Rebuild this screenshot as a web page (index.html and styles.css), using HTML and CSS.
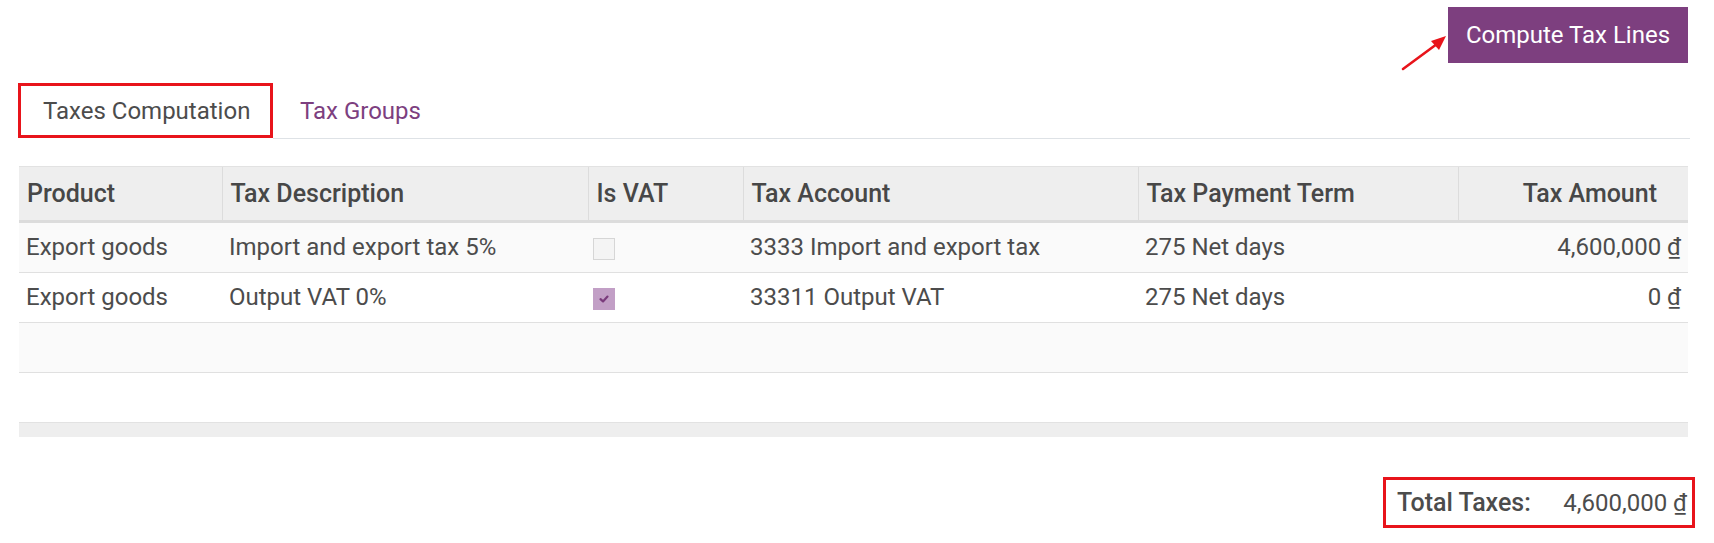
FILE: index.html
```html
<!DOCTYPE html>
<html lang="en">
<head>
<meta charset="utf-8">
<title>Taxes Computation</title>
<link rel="stylesheet" href="styles.css">
</head>
<body>
<div class="page">
  <div class="topbar">
    <svg class="arrow" width="56" height="44" viewBox="0 0 56 44" aria-hidden="true">
      <line x1="4" y1="39" x2="42" y2="11" stroke="#e8141b" stroke-width="2.6" stroke-linecap="round"/>
      <polygon points="47,6 32,11 40,20" fill="#e8141b"/>
    </svg>
    <button class="btn-primary">Compute Tax Lines</button>
  </div>

  <div class="tabs">
    <div class="tab active">Taxes Computation</div>
    <div class="tab">Tax Groups</div>
    <div class="tab-rest"></div>
  </div>

  <table class="grid">
    <colgroup>
      <col class="c-product"><col class="c-desc"><col class="c-vat"><col class="c-account"><col class="c-term"><col class="c-amount">
    </colgroup>
    <thead>
      <tr>
        <th>Product</th>
        <th>Tax Description</th>
        <th>Is VAT</th>
        <th>Tax Account</th>
        <th>Tax Payment Term</th>
        <th class="num">Tax Amount</th>
      </tr>
    </thead>
    <tbody>
      <tr class="odd">
        <td>Export goods</td>
        <td>Import and export tax 5%</td>
        <td><span class="cb"></span></td>
        <td>3333 Import and export tax</td>
        <td>275 Net days</td>
        <td class="num">4,600,000 ₫</td>
      </tr>
      <tr>
        <td>Export goods</td>
        <td>Output VAT 0%</td>
        <td><span class="cb checked"><svg width="12" height="10" viewBox="0 0 12 10"><path d="M2.5 5.2 L5 7.4 L9.5 2.6" fill="none" stroke="#7a3b7c" stroke-width="2.2" stroke-linecap="round" stroke-linejoin="round"/></svg></span></td>
        <td>33311 Output VAT</td>
        <td>275 Net days</td>
        <td class="num">0 ₫</td>
      </tr>
      <tr class="odd empty"><td colspan="6"></td></tr>
      <tr class="empty blank"><td colspan="6"></td></tr>
    </tbody>
    <tfoot>
      <tr><td colspan="6"></td></tr>
    </tfoot>
  </table>

  <div class="totals">
    <div class="total-box">
      <span class="total-label">Total Taxes:</span>
      <span class="total-value">4,600,000 ₫</span>
    </div>
  </div>
</div>
</body>
</html>
```

FILE: styles.css
```css
html, body {
  margin: 0;
  padding: 0;
  background: #ffffff;
}

body {
  font-family: Roboto, "Noto Sans", "Liberation Sans", sans-serif;
  font-size: 24px;
  color: #4c4c4c;
  width: 1714px;
  height: 543px;
  overflow: hidden;
}

.page {
  padding: 7px 24px 0 18px;
}

.topbar {
  position: relative;
  display: flex;
  justify-content: flex-end;
  padding-right: 2px;
}

.arrow {
  position: absolute;
  left: 1381px;
  top: 23px;
}

.btn-primary {
  font-family: inherit;
  font-size: 24px;
  color: #ffffff;
  background: #7d3f7f;
  border: none;
  width: 240px;
  height: 56px;
  padding: 0;
  cursor: pointer;
}

.tabs {
  display: flex;
  margin-top: 20px;
  height: 56px;
}

.tab {
  display: flex;
  align-items: center;
  padding: 0 27px 0 0;
  color: #7d3f7f;
  border-bottom: 1px solid #dee2e6;
  box-sizing: border-box;
}

.tab.active {
  width: 255px;
  height: 55px;
  padding: 0 0 0 22px;
  color: #4c4c4c;
  border: 3px solid #e8141b;
  margin-right: 27px;
}

.tab-rest {
  flex: 1;
  border-bottom: 1px solid #dee2e6;
}

.tab.active + .tab {
  margin-left: -27px;
  padding-left: 27px;
}

.grid {
  margin: 27px 2px 0 1px;
  width: 1669px;
  table-layout: fixed;
  border-collapse: collapse;
}

.c-product { width: 203px; }
.c-desc { width: 366px; }
.c-vat { width: 155px; }
.c-account { width: 395px; }
.c-term { width: 320px; }
.c-amount { width: 230px; }

.grid th {
  background: #eeeeee;
  font-size: 25px;
  font-weight: 500;
  color: #474747;
  text-align: left;
  height: 55px;
  padding: 0 8px;
  line-height: 25px;
  border-top: 1px solid #e2e2e2;
  border-bottom: 3px solid #dcdcdc;
  border-left: 1px solid #dcdcdc;
  white-space: nowrap;
  box-sizing: border-box;
}

.grid th:first-child {
  border-left: none;
}

.grid th.num {
  text-align: right;
  padding-right: 31px;
}

.grid td {
  height: 49px;
  padding: 0 7px;
  line-height: 25px;
  border-bottom: 1px solid #e0e0e0;
  white-space: nowrap;
  overflow: hidden;
}

.grid td.num {
  text-align: right;
}

.grid tr.odd td {
  background: #fafafa;
}

.grid tr.blank td {
  border-bottom: none;
}

.grid tfoot td {
  height: 14px;
  padding: 0;
  background: #eeeeee;
  border-top: 1px solid #e2e2e2;
  border-bottom: none;
}

.cb {
  display: inline-flex;
  align-items: center;
  justify-content: center;
  width: 22px;
  height: 22px;
  box-sizing: border-box;
  border: 1px solid #d6d6d6;
  background: #f4f4f4;
  vertical-align: middle;
  margin-left: -2px;
}

.cb.checked {
  background: #c29fc6;
  border-color: #c29fc6;
}

.totals {
  display: flex;
  justify-content: flex-end;
  margin: 40px -5px 0 0;
}

.total-box {
  display: flex;
  width: 312px;
  height: 51px;
  box-sizing: border-box;
  border: 3px solid #e8141b;
  align-items: center;
  padding: 0 5px 0 11px;
}

.total-label {
  font-size: 25px;
  font-weight: 500;
  flex: 1;
}

.total-value {
  text-align: right;
}
```
